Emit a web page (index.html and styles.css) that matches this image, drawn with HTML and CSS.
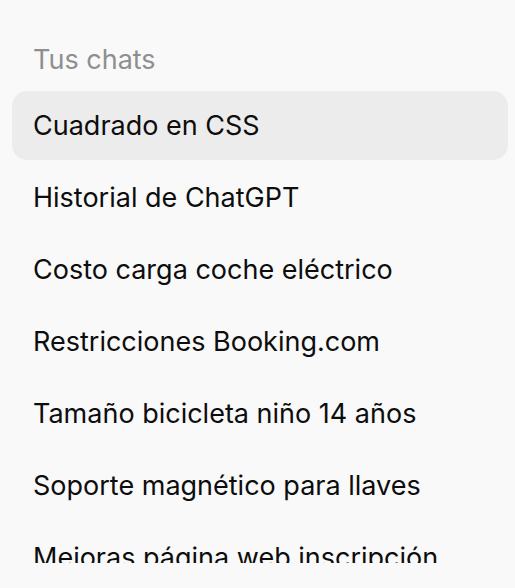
FILE: index.html
```html
<!DOCTYPE html>
<html lang="es">
<head>
    <meta charset="UTF-8">
    <meta name="viewport" content="width=device-width, initial-scale=1.0">
    <title>Tus chats</title>
    <link rel="stylesheet" href="styles.css">
</head>
<body>
    <nav class="sidebar">
        <h2 class="section-title">Tus chats</h2>
        <ul class="chat-list">
            <li class="chat-item active">Cuadrado en CSS</li>
            <li class="chat-item">Historial de ChatGPT</li>
            <li class="chat-item">Costo carga coche eléctrico</li>
            <li class="chat-item">Restricciones Booking.com</li>
            <li class="chat-item">Tamaño bicicleta niño 14 años</li>
            <li class="chat-item">Soporte magnético para llaves</li>
            <li class="chat-item">Mejoras página web inscripción</li>
        </ul>
    </nav>
</body>
</html>
```

FILE: styles.css
```css
body {
    margin: 0;
    background: #f9f9f9;
    font-family: Inter, "Noto Sans", sans-serif;
    color: #0d0d0d;
}

.sidebar {
    padding: 0 7px 0 12px;
}

.section-title {
    margin: 0;
    padding: 40px 21px 11px;
    font-size: 27px;
    font-weight: 400;
    line-height: 40px;
    color: #8f8f8f;
}

.chat-list {
    list-style: none;
    margin: 0;
    padding: 0;
    height: 472px;
    overflow: hidden;
    display: flex;
    flex-direction: column;
    gap: 3px;
}

.chat-item {
    flex: none;
    height: 69px;
    padding: 0 21px;
    border-radius: 15px;
    font-size: 27px;
    line-height: 69px;
    white-space: nowrap;
}

.active {
    background: #ececec;
}
```
